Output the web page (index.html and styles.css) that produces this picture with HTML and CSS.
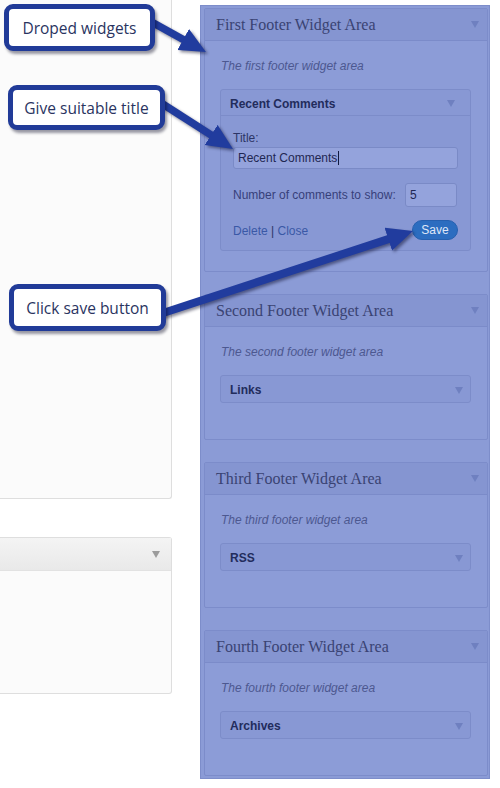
FILE: index.html
```html
<!DOCTYPE html>
<html>
<head>
<meta charset="utf-8">
<link rel="stylesheet" href="styles.css">
</head>
<body>
<div class="page">
  <div class="left-col">
    <div class="panel panel-main"></div>
    <div class="panel panel-second">
      <div class="panel-head"><span class="tri tri-gray"></span></div>
    </div>
  </div>

  <div class="overlay">
    <div class="area">
      <div class="area-head"><span>First Footer Widget Area</span><span class="tri"></span></div>
      <div class="area-body">
        <p class="desc">The first footer widget area</p>
        <div class="widgets">
          <div class="widget open">
            <div class="widget-head"><span>Recent Comments</span><span class="tri tri-open"></span></div>
            <div class="widget-form">
              <div class="label">Title:</div>
              <div class="input input-wide">Recent Comments<span class="caret"></span></div>
              <div class="row">
                <span class="label-2">Number of comments to show:</span>
                <div class="input input-num">5</div>
              </div>
              <div class="actions">
                <span class="links"><span class="link">Delete</span> | <span class="link">Close</span></span>
                <span class="save">Save</span>
              </div>
            </div>
          </div>
        </div>
      </div>
    </div>

    <div class="area">
      <div class="area-head"><span>Second Footer Widget Area</span><span class="tri"></span></div>
      <div class="area-body">
        <p class="desc">The second footer widget area</p>
        <div class="widgets">
          <div class="widget"><div class="widget-head"><span>Links</span><span class="tri"></span></div></div>
        </div>
      </div>
    </div>

    <div class="area">
      <div class="area-head"><span>Third Footer Widget Area</span><span class="tri"></span></div>
      <div class="area-body">
        <p class="desc">The third footer widget area</p>
        <div class="widgets">
          <div class="widget"><div class="widget-head"><span>RSS</span><span class="tri"></span></div></div>
        </div>
      </div>
    </div>

    <div class="area">
      <div class="area-head"><span>Fourth Footer Widget Area</span><span class="tri"></span></div>
      <div class="area-body">
        <p class="desc">The fourth footer widget area</p>
        <div class="widgets">
          <div class="widget"><div class="widget-head"><span>Archives</span><span class="tri"></span></div></div>
        </div>
      </div>
    </div>
  </div>
</div>

<svg class="arrows" width="500" height="788" viewBox="0 0 500 788">
  <defs>
    <marker id="ah" markerUnits="userSpaceOnUse" markerWidth="28" markerHeight="26" refX="16" refY="12" orient="auto">
      <path d="M0,0 L26,12 L0,24 Z" fill="#213c9e"/>
    </marker>
  </defs>
  <line x1="148" y1="20" x2="197.2" y2="47.2" stroke="#213c9e" stroke-width="7.5" marker-end="url(#ah)"/>
  <line x1="158" y1="101" x2="224.6" y2="143.6" stroke="#213c9e" stroke-width="7.5" marker-end="url(#ah)"/>
  <line x1="160" y1="314" x2="403.5" y2="234.1" stroke="#213c9e" stroke-width="8" marker-end="url(#ah)"/>
</svg>

<div class="callout callout-1">Droped widgets</div>
<div class="callout callout-2">Give suitable title</div>
<div class="callout callout-3">Click save button</div>
</body>
</html>
```

FILE: styles.css
```css
html, body {
  margin: 0;
  padding: 0;
  background: #ffffff;
}
body {
  width: 500px;
  height: 788px;
  overflow: hidden;
  position: relative;
  font-family: "Liberation Sans", Arial, sans-serif;
}
.page {
  display: flex;
  align-items: flex-start;
  gap: 28px;
  width: 500px;
  height: 788px;
}

/* left WordPress panels */
.left-col {
  width: 172px;
  flex: none;
  display: flex;
  flex-direction: column;
}
.panel {
  box-sizing: border-box;
  background: #fbfbfb;
  border: 1px solid #dedede;
  border-left: none;
  border-radius: 0 3px 3px 0;
}
.panel-main {
  height: 503px;
  margin-top: -4px;
  border-top: none;
}
.panel-second {
  height: 157px;
  margin-top: 38px;
}
.panel-head {
  height: 33px;
  box-sizing: border-box;
  border-bottom: 1px solid #e2e2e2;
  background: linear-gradient(#f4f4f4, #e9e9e9);
  display: flex;
  align-items: center;
  justify-content: flex-end;
  padding-right: 11px;
}

/* triangles */
.tri {
  width: 0;
  height: 0;
  border-left: 4px solid transparent;
  border-right: 4px solid transparent;
  border-top: 7px solid #6f80c0;
  flex: none;
}
.tri-gray { border-top-color: #9c9c9c; }

/* blue overlay */
.overlay {
  flex: none;
  box-sizing: border-box;
  width: 290px;
  height: 774px;
  margin-top: 5px;
  background: #8b9bd6;
  border: 1px solid #7d8dca;
  padding: 2px 1px 0 3px;
  display: flex;
  flex-direction: column;
  gap: 22px;
}
.area {
  box-sizing: border-box;
  border: 1px solid #7c8cca;
  background: #8c9cd7;
  border-radius: 2px;
}
.area-head {
  height: 32px;
  box-sizing: border-box;
  border-bottom: 1px solid #7b8bc9;
  background: #8595d1;
  display: flex;
  align-items: center;
  justify-content: space-between;
  padding: 0 8px 0 11px;
  font-family: "Liberation Serif", "Times New Roman", serif;
  font-size: 16px;
  color: #3a4373;
}
.area-body {
  padding: 0 16px 20px 15px;
}
.desc {
  margin: 18px 0 16px 1px;
  font-size: 12px;
  line-height: 14px;
  font-style: italic;
  color: #4c5890;
}
.widgets {
  min-height: 44px;
}
.widget {
  border: 1px solid #7c8cc9;
  background: #8898d4;
  border-radius: 3px;
}
.widget-head {
  height: 24px;
  padding: 2px 7px 0 9px;
  display: flex;
  align-items: center;
  justify-content: space-between;
  font-size: 12px;
  font-weight: bold;
  color: #222c5c;
}
.widget.open .widget-head {
  height: 23px;
  border-bottom: 1px solid #7c8cc9;
  padding-right: 15px;
}
.widget-form {
  padding: 15px 12px 10px 12px;
}
.label {
  font-size: 12px;
  line-height: 14px;
  color: #2c3566;
  margin-bottom: 2px;
}
.input {
  box-sizing: border-box;
  background: #94a3dc;
  border: 1px solid #7a8ac6;
  border-radius: 3px;
  font-size: 12px;
  color: #1f2752;
  display: flex;
  align-items: center;
  padding-left: 4px;
}
.input-wide {
  height: 22px;
}
.caret {
  display: inline-block;
  width: 1px;
  height: 14px;
  background: #111a40;
  margin-left: 1px;
}
.row {
  margin-top: 14px;
  height: 24px;
  display: flex;
  align-items: center;
}
.label-2 {
  font-size: 12px;
  color: #37407a;
  flex: 1;
}
.input-num {
  width: 52px;
  height: 24px;
  margin-right: 1px;
}
.actions {
  margin-top: 13px;
  height: 20px;
  display: flex;
  align-items: center;
  justify-content: space-between;
  font-size: 12px;
  color: #2c3566;
}
.links {
  padding-top: 2px;
}
.link {
  color: #3a58a6;
}
.save {
  box-sizing: border-box;
  width: 46px;
  height: 20px;
  border-radius: 10px;
  background: #2c6dc0;
  border: 1px solid #2660b0;
  color: #dfe7f8;
  font-size: 12px;
  display: flex;
  align-items: center;
  justify-content: center;
}

/* annotation arrows and callouts */
.arrows {
  position: absolute;
  left: 0;
  top: 0;
  pointer-events: none;
  filter: drop-shadow(2px 2px 1.5px rgba(0, 0, 30, 0.45));
}
.callout {
  position: absolute;
  box-sizing: border-box;
  background: #ffffff;
  border: 5px solid #213b98;
  border-radius: 9px;
  box-shadow: 2px 3px 3px rgba(0, 0, 30, 0.4);
  font-family: "Open Sans", "Noto Sans", sans-serif;
  font-size: 15.5px;
  color: #2a345f;
  display: flex;
  align-items: center;
  justify-content: center;
}
.callout-1 {
  left: 4px;
  top: 4px;
  width: 151px;
  height: 47px;
}
.callout-2 {
  left: 8px;
  top: 85px;
  width: 157px;
  height: 45px;
}
.callout-3 {
  left: 9px;
  top: 284px;
  width: 157px;
  height: 47px;
}
```
